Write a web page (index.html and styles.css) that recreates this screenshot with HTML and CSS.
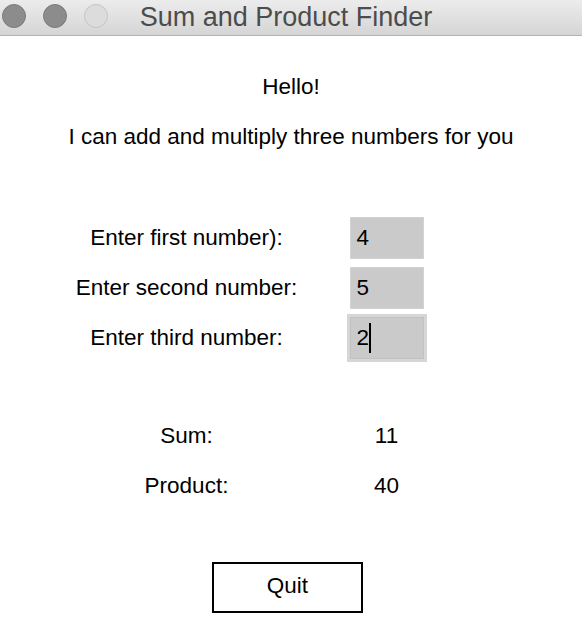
FILE: index.html
```html
<!DOCTYPE html>
<html>
<head>
<meta charset="utf-8">
<link rel="stylesheet" href="styles.css">
</head>
<body>
<div class="window">
  <div class="titlebar">
    <div class="lights">
      <span class="light dark"></span>
      <span class="light dark"></span>
      <span class="light pale"></span>
    </div>
    <div class="title">Sum and Product Finder</div>
  </div>
  <div class="content">
    <div class="intro">
      <div class="line">Hello!</div>
      <div class="line">I can add and multiply three numbers for you</div>
    </div>
    <div class="grid inputs">
      <div class="cell">Enter first number):</div>
      <div class="cell"><div class="entry">4</div></div>
      <div class="cell">Enter second number:</div>
      <div class="cell"><div class="entry">5</div></div>
      <div class="cell">Enter third number:</div>
      <div class="cell"><div class="entry focus">2<span class="caret"></span></div></div>
    </div>
    <div class="grid results">
      <div class="cell">Sum:</div>
      <div class="cell">11</div>
      <div class="cell">Product:</div>
      <div class="cell">40</div>
    </div>
    <div class="actions">
      <div class="button">Quit</div>
    </div>
  </div>
</div>
</body>
</html>
```

FILE: styles.css
```css
html, body {
  margin: 0;
  padding: 0;
  background: #ffffff;
}
.window {
  width: 582px;
  height: 628px;
  font-family: "Liberation Sans", Arial, sans-serif;
  color: #000;
  overflow: hidden;
}
.titlebar {
  height: 36px;
  box-sizing: border-box;
  border-bottom: 1px solid #b3b3b3;
  background: linear-gradient(#ececec, #d5d5d5);
  display: flex;
  align-items: center;
  position: relative;
}
.lights {
  display: flex;
  gap: 17px;
  padding-left: 2px;
  padding-bottom: 3px;
}
.light {
  width: 24px;
  height: 24px;
  border-radius: 50%;
  box-sizing: border-box;
}
.light.dark {
  background: #8c8c8c;
  border: 1px solid #7a7a7a;
}
.light.pale {
  background: #dcdcdc;
  border: 1px solid #c4c4c4;
}
.title {
  position: absolute;
  left: 0;
  right: 10px;
  top: 2px;
  text-align: center;
  font-size: 27px;
  line-height: 30px;
  color: #4c4c4c;
  white-space: nowrap;
}
.content {
  padding-top: 26px;
  font-size: 22.5px;
}
.intro .line {
  height: 50px;
  line-height: 50px;
  text-align: center;
  white-space: nowrap;
}
.grid {
  display: grid;
  grid-template-columns: 200px 200px;
  grid-auto-rows: 50px;
  justify-content: center;
  margin-left: -9px;
}
.inputs {
  margin-top: 51px;
}
.results {
  margin-top: 48px;
}
.cell {
  display: flex;
  align-items: center;
  justify-content: center;
  white-space: nowrap;
}
.entry {
  width: 74px;
  height: 42px;
  box-sizing: border-box;
  background: #cacaca;
  border: 1px solid #d3d3d3;
  display: flex;
  align-items: center;
  padding-left: 6px;
}
.entry.focus {
  box-shadow: 0 0 0 3px #d6d6d6;
  border-color: #c2c2c2;
}
.caret {
  display: inline-block;
  width: 2px;
  height: 30px;
  background: #000;
}
.actions {
  margin-top: 51px;
  display: flex;
  justify-content: center;
}
.button {
  width: 151px;
  height: 51px;
  box-sizing: border-box;
  border: 2px solid #000;
  display: flex;
  align-items: center;
  justify-content: center;
  margin-right: 7px;
  padding-bottom: 3px;
}
```
